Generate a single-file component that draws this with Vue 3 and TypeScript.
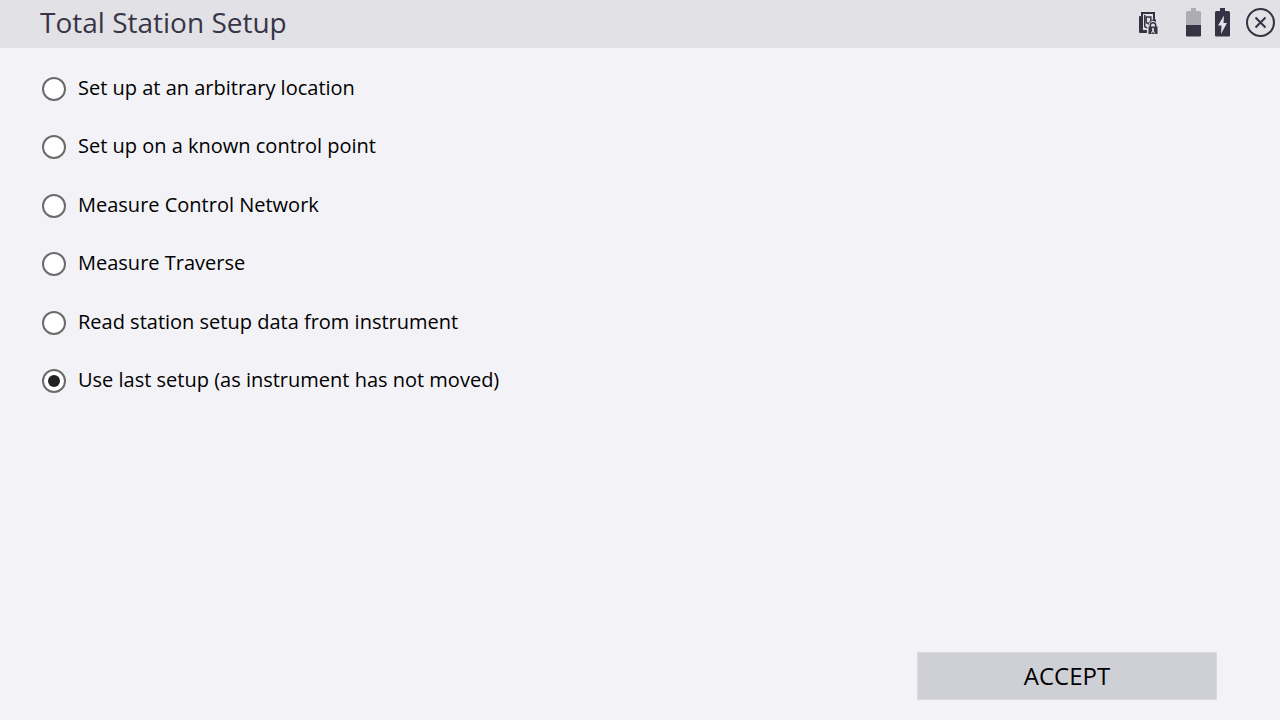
<script setup lang="ts">
import { ref } from 'vue'

interface SetupMethod {
  id: string
  label: string
}

const methods: SetupMethod[] = [
  { id: 'arbitrary', label: 'Set up at an arbitrary location' },
  { id: 'known', label: 'Set up on a known control point' },
  { id: 'network', label: 'Measure Control Network' },
  { id: 'traverse', label: 'Measure Traverse' },
  { id: 'read', label: 'Read station setup data from instrument' },
  { id: 'last', label: 'Use last setup (as instrument has not moved)' },
]

const selected = ref('last')
</script>

<template>
  <div class="screen">
    <header class="bar">
      <h1 class="title">Total Station Setup</h1>
      <div class="status">
        <svg class="instrument" width="20" height="23" viewBox="0 0 20 23" aria-hidden="true">
          <path class="ink" d="M1 5h3v14h4v3H1q-1 0-1-1V6q0-1 1-1z" />
          <path class="ink" d="M2 1h14v2H4v16H2z" />
          <path class="ink" d="M14 1h2v7l1 1v3h-2l-2-2 1-2z" />
          <path class="ink" d="M5 4h1.500v11l2 1.500V18L5 16z" />
          <path class="line" d="M11.800 9.800V6H7.200v4.500q0 2 2.300 2" />
          <path class="ink" d="M9 12l3-3 1.500 1L9 14.500z" />
          <path class="halo" d="M8.500 23v-8h1v-.5a4.500 4.500 0 0 1 9 0v.5h1v8z" />
          <path class="line" d="M11.300 16v-1.500a2.700 2.700 0 0 1 5.400 0V16" />
          <path class="ink" d="M9.500 15.500h9v7.500h-9z" />
          <path class="hole" d="M14 16.500l1.200 1.500-.5 1 1.300 3.500h-1l-1-2.300-1 2.300h-1l1.300-3.500-.5-1z" />
        </svg>
        <svg width="15" height="29" viewBox="0 0 15 29" aria-hidden="true">
          <path class="empty" d="M5 0h5v3h3.500q1.500 0 1.500 1.500V17H0V4.500Q0 3 1.500 3H5z" />
          <path class="ink" d="M0 17h15v10.500q0 1-1 1H1q-1 0-1-1z" />
        </svg>
        <svg width="15" height="29" viewBox="0 0 15 29" aria-hidden="true">
          <path class="ink" d="M5 0h5v3h3.500q1.500 0 1.500 1.500v23q0 1-1 1H1q-1 0-1-1v-23Q0 3 1.500 3H5z" />
          <path class="hole" d="M9 7.500L3 17.500h3.500L6 26l6-11H8.500z" />
        </svg>
        <button class="close" type="button" aria-label="Close">
          <svg width="29" height="29" viewBox="0 0 29 29" aria-hidden="true">
            <circle class="line" cx="14.500" cy="14.500" r="13.500" />
            <path class="line" d="M9.500 9.500l10 10M19.500 9.500l-10 10" />
          </svg>
        </button>
      </div>
    </header>

    <main class="options" role="radiogroup" aria-label="Total Station Setup">
      <label v-for="method in methods" :key="method.id" class="option" :for="method.id">
        <input :id="method.id" v-model="selected" class="radio" type="radio" name="method" :value="method.id" />
        <span class="text">{{ method.label }}</span>
      </label>
    </main>

    <footer class="footer">
      <button class="accept" type="button">ACCEPT</button>
    </footer>
  </div>
</template>

<style>
body {
  background: #f3f2f7;
}
</style>

<style scoped>
.screen {
  box-sizing: border-box;
  min-height: 100vh;
  display: flex;
  flex-direction: column;
  background: #f3f2f7;
  color: #000;
  font-family: "Open Sans", "Noto Sans", sans-serif;
  font-kerning: none;
}
.bar {
  display: flex;
  align-items: center;
  justify-content: space-between;
  height: 48px;
  padding: 0 5px 3px 40px;
  box-sizing: border-box;
  background: #e2e1e6;
}
.title {
  margin: 0;
  padding-bottom: 2px;
  color: #383547;
  font-size: 28px;
  font-weight: 400;
  line-height: 40px;
}
.status {
  display: flex;
  align-items: center;
  gap: 14px;
}
.instrument {
  margin-right: 13px;
}
.ink {
  fill: #353344;
}
.empty {
  fill: #adacb4;
}
.hole,
.halo {
  fill: #e2e1e6;
}
.line {
  fill: none;
  stroke: #353344;
  stroke-width: 2;
}
.instrument .line {
  stroke-width: 1.500;
}
.close {
  display: flex;
  margin-left: 2px;
  padding: 0;
  border: 0;
  border-radius: 50%;
  background: none;
  cursor: pointer;
}
.options {
  flex: none;
  display: flex;
  flex-direction: column;
  align-items: flex-start;
  justify-content: space-between;
  min-height: 320px;
  padding: 27px 42px;
}
.option {
  display: flex;
  align-items: center;
  gap: 12px;
  font-size: 20px;
  line-height: 26px;
  cursor: pointer;
}
.text {
  padding-bottom: 2px;
}
.radio {
  appearance: none;
  display: grid;
  place-items: center;
  flex: none;
  box-sizing: border-box;
  width: 24px;
  height: 24px;
  margin: 0;
  border: 2px solid #6b6b6b;
  border-radius: 50%;
  background: #fff;
}
.radio:checked::before {
  content: "";
  width: 12px;
  height: 12px;
  border-radius: 50%;
  background: #222;
}
.footer {
  display: flex;
  justify-content: flex-end;
  margin-top: auto;
  padding: 0 63px 20px;
}
.accept {
  width: 300px;
  height: 48px;
  padding: 0;
  border: 1px solid #d8d8dd;
  background: #cfd0d5;
  color: #000;
  font-family: inherit;
  font-size: 24px;
  line-height: 32px;
  cursor: pointer;
}
</style>
